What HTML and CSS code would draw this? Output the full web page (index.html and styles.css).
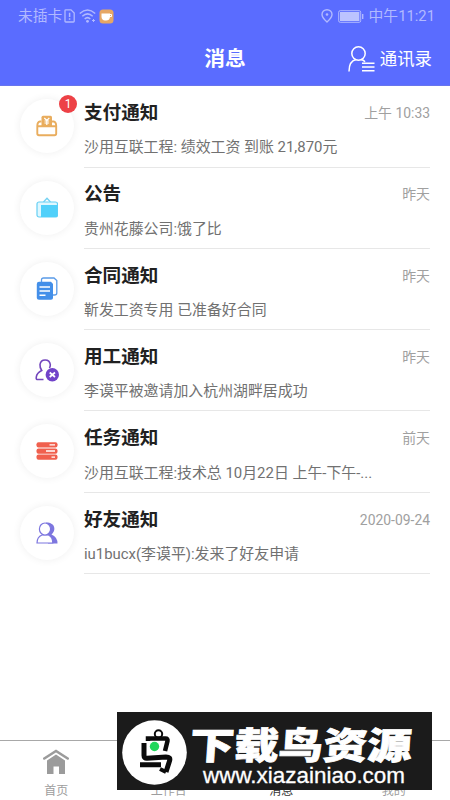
FILE: index.html
```html
<!DOCTYPE html>
<html lang="zh-CN">
<head>
<meta charset="utf-8">
<title>消息</title>
<link rel="stylesheet" href="styles.css">
</head>
<body>
<div class="screen">
  <header class="header">
    <div class="status">
      <span class="carrier">未插卡</span>
      <svg class="sim" width="11" height="14" viewBox="0 0 11 14" fill="none" stroke="currentColor" stroke-width="1.3"><path d="M1 1.6Q1 .8 1.8.8H7L10.2 4V12.2Q10.2 13 9.4 13H1.8Q1 13 1 12.2Z"/><path d="M5.6 3.7V8M5.6 9.3V10.8" stroke-width="1.5"/></svg>
      <svg class="wifi" width="18" height="14" viewBox="0 0 18 14" fill="none" stroke="currentColor" stroke-width="1.5"><path d="M.8 4.500Q8.500-2.500 16.200 4.500M3.300 7.300Q8.500 2.500 13.700 7.300M5.700 10Q8.500 7.300 11.300 10"/><circle cx="8.500" cy="12.300" r="1.400" fill="currentColor" stroke="none"/><path d="M13 11.500H16M14.500 10V13" stroke-width="1"/></svg>
      <svg class="cup" width="15" height="15" viewBox="0 0 15 15"><rect x=".5" y=".5" width="14" height="14" rx="3.500" fill="#e6a765"/><path d="M2.500 4.500H11V8A4 4 0 0 1 7 11.500H6A4 4 0 0 1 2.500 8Z" fill="#fff"/><path d="M10.500 5.500H12.500V7.500H10.500" fill="none" stroke="#fff"/></svg>
      <svg class="pin" width="12" height="14" viewBox="0 0 12 14" fill="none" stroke="currentColor" stroke-width="1.400"><path d="M6 13Q1 8.500 1 5.500A5 4.800 0 0 1 11 5.500Q11 8.500 6 13Z"/><circle cx="6" cy="5.500" r="1.300" fill="currentColor" stroke="none"/></svg>
      <svg class="battery" width="26" height="13" viewBox="0 0 26 13" fill="none" stroke="currentColor"><rect x=".7" y=".7" width="22" height="11.600" rx="1.500"/><rect x="2" y="2" width="19.400" height="9" fill="#bcc3ff" stroke="none"/><path d="M24.700 4V9" stroke-width="1.400"/></svg>
      <span class="clock">中午11:21</span>
    </div>
    <div class="navbar">
      <h1>消息</h1>
      <div class="contacts">
        <svg width="27" height="26" viewBox="0 0 27 26" fill="none" stroke="#fff" stroke-width="1.500"><circle cx="10.500" cy="7.500" r="6.700"/><path d="M1 25.500C1 18 4 14.500 8 13.600M13 13.600Q15.500 14 17 15.800M14 17.300H26.500M14 21H26.500M14 24.700H26.500"/></svg>
        <span>通讯录</span>
      </div>
    </div>
  </header>

  <main class="list">
    <div class="row">
      <div class="avatar"><svg width="22" height="22" viewBox="0 0 22 22"><path d="M5.500 11V2.300Q5.500 .7 7 .7H14.500Q16 .7 16 2.300V11Z" fill="#e9ad5e"/><path d="M5.500 6.500H4Q1.300 7 1.300 11V18.500Q1.300 20.200 3 20.200H18.500Q20.200 20.200 20.200 18.500V11Q20.200 7 17.500 6.500H16M1.500 11.300H20" fill="none" stroke="#e9ad5e" stroke-width="1.900"/><path d="M8.300 3L10.800 5.500L13.300 3M10.800 5.500V10M8.500 6H13.100M8.500 8H13.100" fill="none" stroke="#fff" stroke-width="1.200"/></svg><b class="badge">1</b></div>
      <div class="body"><div class="top"><h2>支付通知</h2><time>上午 10:33</time></div><p>沙用互联工程: 绩效工资 到账 21,870元</p></div>
    </div>
    <div class="row">
      <div class="avatar"><svg width="22" height="22" viewBox="0 0 22 22"><path d="M7.500 5L11 1.300L14.500 5" fill="none" stroke="#73d2f3" stroke-width="1.300"/><rect x="1" y="5" width="20.500" height="15" rx="2" fill="#dff7ff" stroke="#65cff4" stroke-width="1.200"/><path d="M5 8H21.500V18.500Q21.500 20 20 20H5Z" fill="#50d0fa"/></svg></div>
      <div class="body"><div class="top"><h2>公告</h2><time>昨天</time></div><p>贵州花藤公司:饿了比</p></div>
    </div>
    <div class="row">
      <div class="avatar"><svg width="22" height="24" viewBox="0 0 22 24"><path d="M5.500 5V3Q5.500 1 7.500 1H18L20.800 3.500V16Q20.800 18 18.500 18H17" fill="none" stroke="#5a9be8" stroke-width="1.300"/><path d="M3 4.700H15L17 7V21Q17 22.800 15 22.800H3Q.8 22.800.8 21V7Q.8 4.700 3 4.700Z" fill="#438fe9"/><path d="M3.500 10H14M3.500 14H14M3.500 18.300H9.500" stroke="#fff" stroke-width="1.500"/></svg></div>
      <div class="body"><div class="top"><h2>合同通知</h2><time>昨天</time></div><p>靳发工资专用 已准备好合同</p></div>
    </div>
    <div class="row">
      <div class="avatar"><svg width="24" height="24" viewBox="0 0 24 24"><path d="M8.500 21.500H2Q1 21.500 1.300 19Q1.700 15 6.700 12.500Q4.700 9.500 5 6.500A5.200 5.200 0 0 1 15.300 6.500Q15.500 8 14.500 10" fill="none" stroke="#7346bd" stroke-width="1.600"/><circle cx="17.300" cy="16.800" r="6.700" fill="#7143c9"/><path d="M14.700 14.500L20 19M20 14.500L14.700 19" stroke="#fff" stroke-width="1.700"/></svg></div>
      <div class="body"><div class="top"><h2>用工通知</h2><time>昨天</time></div><p>李谟平被邀请加入杭州湖畔居成功</p></div>
    </div>
    <div class="row">
      <div class="avatar"><svg width="22" height="18" viewBox="0 0 22 18"><g fill="#f0604e"><rect x=".5" y=".3" width="21" height="5.300" rx="2"/><rect x=".5" y="6.400" width="21" height="5.300" rx="2"/><rect x=".5" y="12.500" width="21" height="5.300" rx="2"/></g><path d="M13.500 2.900H19M10 9H19M15.500 15.200H19" stroke="#fff" stroke-width="1.300"/></svg></div>
      <div class="body"><div class="top"><h2>任务通知</h2><time>前天</time></div><p>沙用互联工程:技术总 10月22日 上午-下午-...</p></div>
    </div>
    <div class="row">
      <div class="avatar"><svg width="22" height="22" viewBox="0 0 22 22"><path d="M10 .5C20 .5 20 9 15.500 12.500Q21.500 15 21.500 21.500H12Z" fill="#7d76df"/><path d="M1 21Q1 15 6 13H12.500Q16.800 15 16.800 21Z" fill="#fff" stroke="#7d76df" stroke-width="1.200"/><ellipse cx="9" cy="7" rx="5.600" ry="6" fill="#fff" stroke="#7d76df" stroke-width="1.200"/></svg></div>
      <div class="body"><div class="top"><h2>好友通知</h2><time>2020-09-24</time></div><p>iu1bucx(李谟平):发来了好友申请</p></div>
    </div>
  </main>

  <nav class="tabs">
    <div class="tab"><svg width="26" height="25" viewBox="0 0 26 25"><path d="M1.300 9.500L13 2L24.700 9.500" fill="none" stroke="#9b9b9b" stroke-width="2.600" stroke-linecap="round"/><path d="M4 11.500L13 5.500L22 11.500V25H16V17.500H10.500V25H4Z" fill="#9b9b9b"/></svg><span>首页</span></div>
    <div class="tab"><span>工作台</span></div>
    <div class="tab active"><span>消息</span></div>
    <div class="tab"><span>我的</span></div>
  </nav>

  <div class="watermark">
    <svg width="315" height="78" viewBox="0 0 315 78">
      <circle cx="37.500" cy="40.500" r="32.300" fill="#fff"/>
      <g fill="none" stroke="#0b0b0b" stroke-width="4.500"><circle cx="41.500" cy="22" r="3.700" stroke-width="2"/><path d="M31 29V26.500H48.500Q51 26.500 50.500 29L48 39"/><path d="M27 31V43.500Q27 46.500 30 46.300L49 45Q54 45 52.500 49L49 60M23 52.700H44" stroke-width="5"/><path d="M43 57L49 60" stroke-width="4"/></g>
      <circle cx="37.500" cy="34.500" r="4.700" fill="#20d75b"/>
      <text class="brand" transform="translate(72 46.500) skewX(-4) scale(1.200 1)" x="0" y="0" textLength="185" lengthAdjust="spacingAndGlyphs">下载鸟资源</text>
      <text class="url" x="86" y="70.500" textLength="202" lengthAdjust="spacingAndGlyphs">www.xiazainiao.com</text>
    </svg>
  </div>
</div>
</body>
</html>
```
FILE: styles.css
```css
* { box-sizing: border-box; margin: 0; padding: 0; }
body { width: 450px; height: 800px; overflow: hidden; background: #fff; font-family: Roboto, "Noto Sans CJK SC", sans-serif; }
.screen { position: relative; display: flex; flex-direction: column; height: 800px; }
.header { height: 86px; flex: none; background: #5a6cff; border-bottom: 1px solid #6875ed; }
.status { display: flex; align-items: center; height: 32px; padding: 0 15px 0 18px; color: #b1b9ff; font-size: 14.8px; line-height: 20px; white-space: nowrap; }
.carrier, .clock { margin-top: -1px; }
.sim { margin-left: 2px; }
.wifi { margin-left: 4px; }
.cup { margin-left: 2px; }
.pin { margin-left: auto; }
.battery { margin: 0 5px 0 5px; }
.navbar { display: grid; grid-template-columns: 1fr auto 1fr; align-items: center; height: 54px; color: #fff; }
h1 { grid-column: 2; font-size: 20.7px; line-height: 28px; font-weight: 700; }
.contacts { display: flex; align-items: center; justify-content: flex-end; gap: 5px; padding-right: 18px; font-size: 17.4px; line-height: 26px; }
.list { flex: 1; padding-top: .3px; }
.row { display: flex; height: 81.3px; padding: 0 20px; }
.avatar { position: relative; display: flex; align-items: center; justify-content: center; flex: none; width: 54px; height: 54px; margin: 13px 10px 0 0; border-radius: 50%; background: #fff; box-shadow: 0 0 9px rgba(0,0,0,.065); }
.badge { position: absolute; top: -4px; right: -3px; width: 18px; height: 18px; border-radius: 50%; background: #ed4146; color: #fff; font-size: 12px; line-height: 18px; font-weight: 400; text-align: center; }
.body { flex: 1; padding-top: 12.9px; border-bottom: 1px solid #e7e7e7; white-space: nowrap; }
.top { display: flex; align-items: center; justify-content: space-between; height: 28px; }
h2 { font-size: 18.6px; line-height: 28px; color: #212121; font-weight: 700; }
time { font-size: 13.9px; line-height: 20px; color: #a0a0a0; }
p { margin-top: 9.3px; font-size: 14.92px; line-height: 22px; color: #717171; }
.tabs { display: grid; grid-template-columns: repeat(4, 1fr); height: 60px; border-top: 1px solid #a8a8a8; }
.tab { display: flex; flex-direction: column; align-items: center; justify-content: flex-end; color: #9d9d9d; font-size: 12px; line-height: 18px; }
.tab svg { margin-bottom: 8px; }
.active { color: #333; }
.watermark { position: absolute; left: 117px; top: 712px; width: 315px; height: 78px; background: #1b1b1b; }
.watermark svg { display: block; }
.brand { font: 900 37px "Noto Sans CJK SC", sans-serif; fill: #fff; stroke: #fff; stroke-width: .8px; }
.url { font: 22px "Liberation Sans", sans-serif; fill: #fff; stroke: #fff; stroke-width: .3px; }
```
